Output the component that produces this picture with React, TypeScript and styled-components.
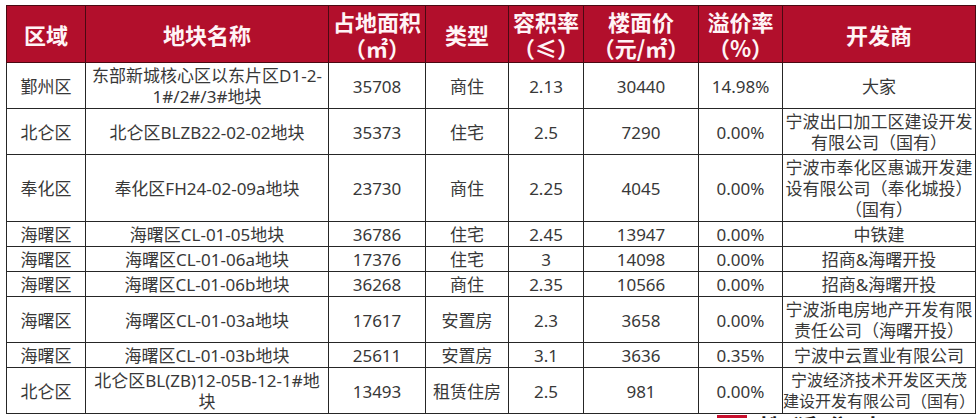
import React from 'react';
import styled, { createGlobalStyle } from 'styled-components';

const GlobalStyle = createGlobalStyle`
  html, body {
    margin: 0;
    padding: 0;
    background: #ffffff;
  }
  body {
    font-family: "Noto Sans", "Noto Sans CJK SC", sans-serif;
    overflow: hidden;
  }
`;

const colors = {
  header: '#b20f2c',
  headerText: '#fff4f6',
  border: '#262626',
  text: '#383838',
  mark: '#c8102e',
};

const Page = styled.div`
  width: 980px;
  height: 418px;
  padding: 5px 0 0 6px;
  box-sizing: border-box;
  overflow: hidden;
`;

const Table = styled.table`
  width: 969px;
  border-collapse: collapse;
  table-layout: fixed;
  color: ${colors.text};
`;

const HeadCell = styled.th`
  background-color: ${colors.header};
  color: ${colors.headerText};
  font-family: "Noto Sans CJK SC", sans-serif;
  font-size: 22px;
  font-weight: 700;
  line-height: 26px;
  padding: 2px 0;
  border: 1px solid #4a0912;
  text-align: center;
  vertical-align: middle;
  white-space: pre-line;
`;

const Cell = styled.td<{ $compact?: boolean }>`
  border: 1px solid ${colors.border};
  font-size: ${(p) => (p.$compact ? '16px' : '17px')};
  line-height: 21px;
  padding: 2px 0 1px;
  text-align: center;
  vertical-align: middle;
  white-space: pre;
  overflow: visible;
`;

const Footer = styled.div`
  display: flex;
  align-items: flex-start;
  gap: 12px;
  padding: 1px 0 0 711px;
`;

const MarkBox = styled.span`
  display: inline-block;
  width: 30px;
  height: 22px;
  background-color: ${colors.mark};
`;

const MarkText = styled.span`
  font-family: "Noto Sans CJK SC", sans-serif;
  font-size: 24px;
  font-weight: 700;
  line-height: 24px;
  color: #1c1c1c;
  letter-spacing: 10px;
`;

type Row = {
  area: string;
  name: string;
  size: string;
  kind: string;
  far: string;
  price: string;
  premium: string;
  dev: string;
  compactDev?: boolean;
};

const columns = [
  { title: '区域', width: 79 },
  { title: '地块名称', width: 243 },
  { title: '占地面积\n（㎡）', width: 97 },
  { title: '类型', width: 83 },
  { title: '容积率\n（≤）', width: 75 },
  { title: '楼面价\n（元/㎡）', width: 115 },
  { title: '溢价率\n（%）', width: 84 },
  { title: '开发商', width: 193 },
];

const rows: Row[] = [
  { area: '鄞州区', name: '东部新城核心区以东片区D1-2-\n1#/2#/3#地块', size: '35708', kind: '商住', far: '2.13', price: '30440', premium: '14.98%', dev: '大家' },
  { area: '北仑区', name: '北仑区BLZB22-02-02地块', size: '35373', kind: '住宅', far: '2.5', price: '7290', premium: '0.00%', dev: '宁波出口加工区建设开发\n有限公司（国有）' },
  { area: '奉化区', name: '奉化区FH24-02-09a地块', size: '23730', kind: '商住', far: '2.25', price: '4045', premium: '0.00%', dev: '宁波市奉化区惠诚开发建\n设有限公司（奉化城投）\n（国有）' },
  { area: '海曙区', name: '海曙区CL-01-05地块', size: '36786', kind: '住宅', far: '2.45', price: '13947', premium: '0.00%', dev: '中铁建' },
  { area: '海曙区', name: '海曙区CL-01-06a地块', size: '17376', kind: '住宅', far: '3', price: '14098', premium: '0.00%', dev: '招商&海曙开投' },
  { area: '海曙区', name: '海曙区CL-01-06b地块', size: '36268', kind: '商住', far: '2.35', price: '10566', premium: '0.00%', dev: '招商&海曙开投' },
  { area: '海曙区', name: '海曙区CL-01-03a地块', size: '17617', kind: '安置房', far: '2.3', price: '3658', premium: '0.00%', dev: '宁波浙电房地产开发有限\n责任公司（海曙开投）' },
  { area: '海曙区', name: '海曙区CL-01-03b地块', size: '25611', kind: '安置房', far: '3.1', price: '3636', premium: '0.35%', dev: '宁波中云置业有限公司' },
  { area: '北仑区', name: '北仑区BL(ZB)12-05B-12-1#地\n块', size: '13493', kind: '租赁住房', far: '2.5', price: '981', premium: '0.00%', dev: '宁波经济技术开发区天茂\n建设开发有限公司（国有）', compactDev: true },
];

export default function App() {
  return (
    <Page>
      <GlobalStyle />
      <Table>
        <colgroup>
          {columns.map((c) => (
            <col key={c.title} style={{ width: c.width }} />
          ))}
        </colgroup>
        <thead>
          <tr>
            {columns.map((c) => (
              <HeadCell key={c.title}>{c.title}</HeadCell>
            ))}
          </tr>
        </thead>
        <tbody>
          {rows.map((r) => (
            <tr key={r.name}>
              <Cell>{r.area}</Cell>
              <Cell>{r.name}</Cell>
              <Cell>{r.size}</Cell>
              <Cell>{r.kind}</Cell>
              <Cell>{r.far}</Cell>
              <Cell>{r.price}</Cell>
              <Cell>{r.premium}</Cell>
              <Cell $compact={r.compactDev}>{r.dev}</Cell>
            </tr>
          ))}
        </tbody>
      </Table>
      <Footer>
        <MarkBox />
        <MarkText>搜狐焦点</MarkText>
      </Footer>
    </Page>
  );
}
